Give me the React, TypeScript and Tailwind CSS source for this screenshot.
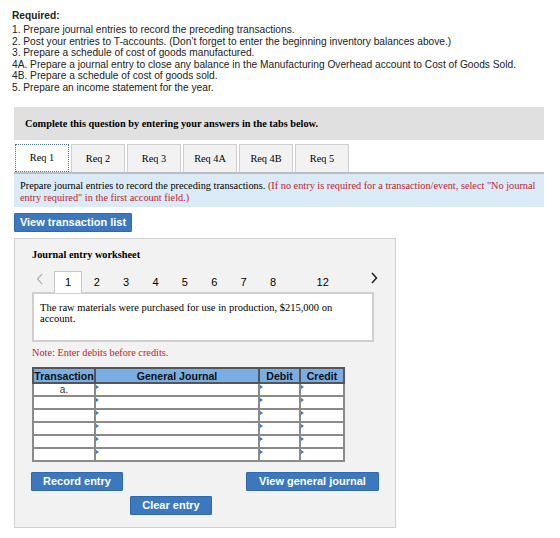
import React from "react";

const serif = "font-['Liberation_Serif',serif]";
const sans = "font-['Liberation_Sans',Arial,sans-serif]";

const required = [
  "1. Prepare journal entries to record the preceding transactions.",
  "2. Post your entries to T-accounts. (Don’t forget to enter the beginning inventory balances above.)",
  "3. Prepare a schedule of cost of goods manufactured.",
  "4A. Prepare a journal entry to close any balance in the Manufacturing Overhead account to Cost of Goods Sold.",
  "4B. Prepare a schedule of cost of goods sold.",
  "5. Prepare an income statement for the year.",
];

const tabs = ["Req 1", "Req 2", "Req 3", "Req 4A", "Req 4B", "Req 5"];
const pages = ["2", "3", "4", "5", "6", "7", "8"];

const Marker = () => (
  <span className="absolute left-0 top-[1px] w-0 h-0 border-y-[2px] border-y-transparent border-l-[3px] border-l-[#3b78c4]" />
);

const BlueButton = ({ label, className = "" }: { label: string; className?: string }) => (
  <button
    className={`block h-[19px] rounded-[1px] border border-[#2f68ad] bg-[#3c78bd] text-white text-[11px] font-bold ${sans} ${className}`}
  >
    {label}
  </button>
);

const App = () => {
  return (
    <div className="w-[560px] h-[538px] bg-white overflow-hidden text-[#222]">
      <div className={`pl-3 pt-[10px] text-[10.2px] leading-[11.5px] ${sans}`}>
        <div className="font-bold leading-[12px] mb-[2px]">Required:</div>
        {required.map((line) => (
          <div key={line}>{line}</div>
        ))}
      </div>

      <div className="ml-[14px] w-[530px] mt-[14px]">
        <div className={`h-[33px] bg-[#e0e0e0] flex items-center pl-[11px] text-[10.3px] font-bold text-black ${serif}`}>
          Complete this question by entering your answers in the tabs below.
        </div>

        <div className="flex gap-[2px] mt-[4px] pl-[1px]">
          {tabs.map((t, i) => (
            <div
              key={t}
              className={`w-[54px] h-[28px] flex items-center justify-center text-[10.3px] text-black ${serif} ${
                i === 0
                  ? "bg-white border border-dotted border-[#4a6fa5]"
                  : "bg-[#f2f2f2] border border-[#cfcfcf] border-b-0"
              }`}
            >
              {t}
            </div>
          ))}
        </div>

        <div className={`bg-[#dbeaf7] border-t-[2px] border-[#bdbdbd] pl-[6px] pr-[1px] pt-[6px] h-[35px] text-[10.3px] leading-[12px] text-black ${serif}`}>
          <p>
            Prepare journal entries to record the preceding transactions.{" "}
            <span className="text-[#c0232c]">
              (If no entry is required for a transaction/event, select "No journal entry required" in the first account field.)
            </span>
          </p>
        </div>

        <BlueButton label="View transaction list" className="mt-[6px] w-[118px]" />

        <div className="mt-[6px] w-[382px] h-[290px] bg-[#f2f2f2] border border-[#d0d0d0] pl-[17px] pt-[9px]">
          <div className={`h-[14px] leading-[14px] text-[10.3px] font-bold text-black ${serif}`}>Journal entry worksheet</div>

          <div className={`flex items-end h-[22px] mt-[8px] text-[11px] text-black ${sans}`}>
            <svg width="8" height="12" viewBox="0 0 8 12" className="ml-[4px] mb-[7px]">
              <polyline points="6,1 1.5,6 6,11" fill="none" stroke="#b5b5b5" strokeWidth="1.3" />
            </svg>
            <div className="ml-[10px] w-[28px] h-[22px] bg-white border border-[#c8c8c8] border-b-0 flex items-center justify-center relative top-[1px]">
              1
            </div>
            <div className="flex items-center h-[22px] pt-[2px]">
              {pages.map((p) => (
                <span key={p} className="w-[29.4px] text-center">
                  {p}
                </span>
              ))}
              <span className="ml-[25px] w-[20px] text-center">12</span>
            </div>
            <svg width="8" height="12" viewBox="0 0 8 12" className="ml-[37px] mb-[8px]">
              <polyline points="2,1 6.5,6 2,11" fill="none" stroke="#222" strokeWidth="1.5" />
            </svg>
          </div>

          <div className={`w-[342px] h-[50px] bg-white border-2 border-[#cfcfcf] px-[6px] pt-[8px] text-[10.5px] leading-[11px] text-black ${serif}`}>
            The raw materials were purchased for use in production, $215,000 on account.
          </div>

          <div className={`mt-[4px] h-[13px] leading-[13px] text-[10.3px] text-[#c0232c] ${serif}`}>Note: Enter debits before credits.</div>

          <table className={`mt-[8px] table-fixed w-[311px] border-collapse border-2 border-[#7a7a7a] text-[11px] ${sans}`}>
            <colgroup>
              <col className="w-[62px]" />
              <col className="w-[164px]" />
              <col className="w-[41px]" />
              <col className="w-[44px]" />
            </colgroup>
            <thead>
              <tr className="h-[15px] bg-[#7aade4] font-bold text-[#111] leading-[12px] text-[10.6px]">
                <th className="border-2 border-[#555] p-0 font-bold whitespace-nowrap">Transaction</th>
                <th className="border-2 border-[#555] p-0 font-bold">General Journal</th>
                <th className="border-2 border-[#555] p-0 font-bold">Debit</th>
                <th className="border-2 border-[#555] p-0 font-bold">Credit</th>
              </tr>
            </thead>
            <tbody>
              {[0, 1, 2, 3, 4, 5].map((r) => (
                <tr key={r} className="h-[13px] bg-white leading-[10px]">
                  <td className="border-2 border-[#8a8a8a] p-0 text-center text-[10px] text-[#333]">{r === 0 ? "a." : ""}</td>
                  <td className="border-2 border-[#8a8a8a] p-0 relative"><Marker /></td>
                  <td className="border-2 border-[#8a8a8a] p-0 relative"><Marker /></td>
                  <td className="border-2 border-[#8a8a8a] p-0 relative"><Marker /></td>
                </tr>
              ))}
            </tbody>
          </table>

          <div className="flex mt-[10px] ml-[-1px]">
            <BlueButton label="Record entry" className="w-[92px]" />
            <BlueButton label="View general journal" className="ml-[123px] w-[133px]" />
          </div>
          <BlueButton label="Clear entry" className="mt-[5px] ml-[98px] w-[82px]" />
        </div>
      </div>
    </div>
  );
};

export default App;
